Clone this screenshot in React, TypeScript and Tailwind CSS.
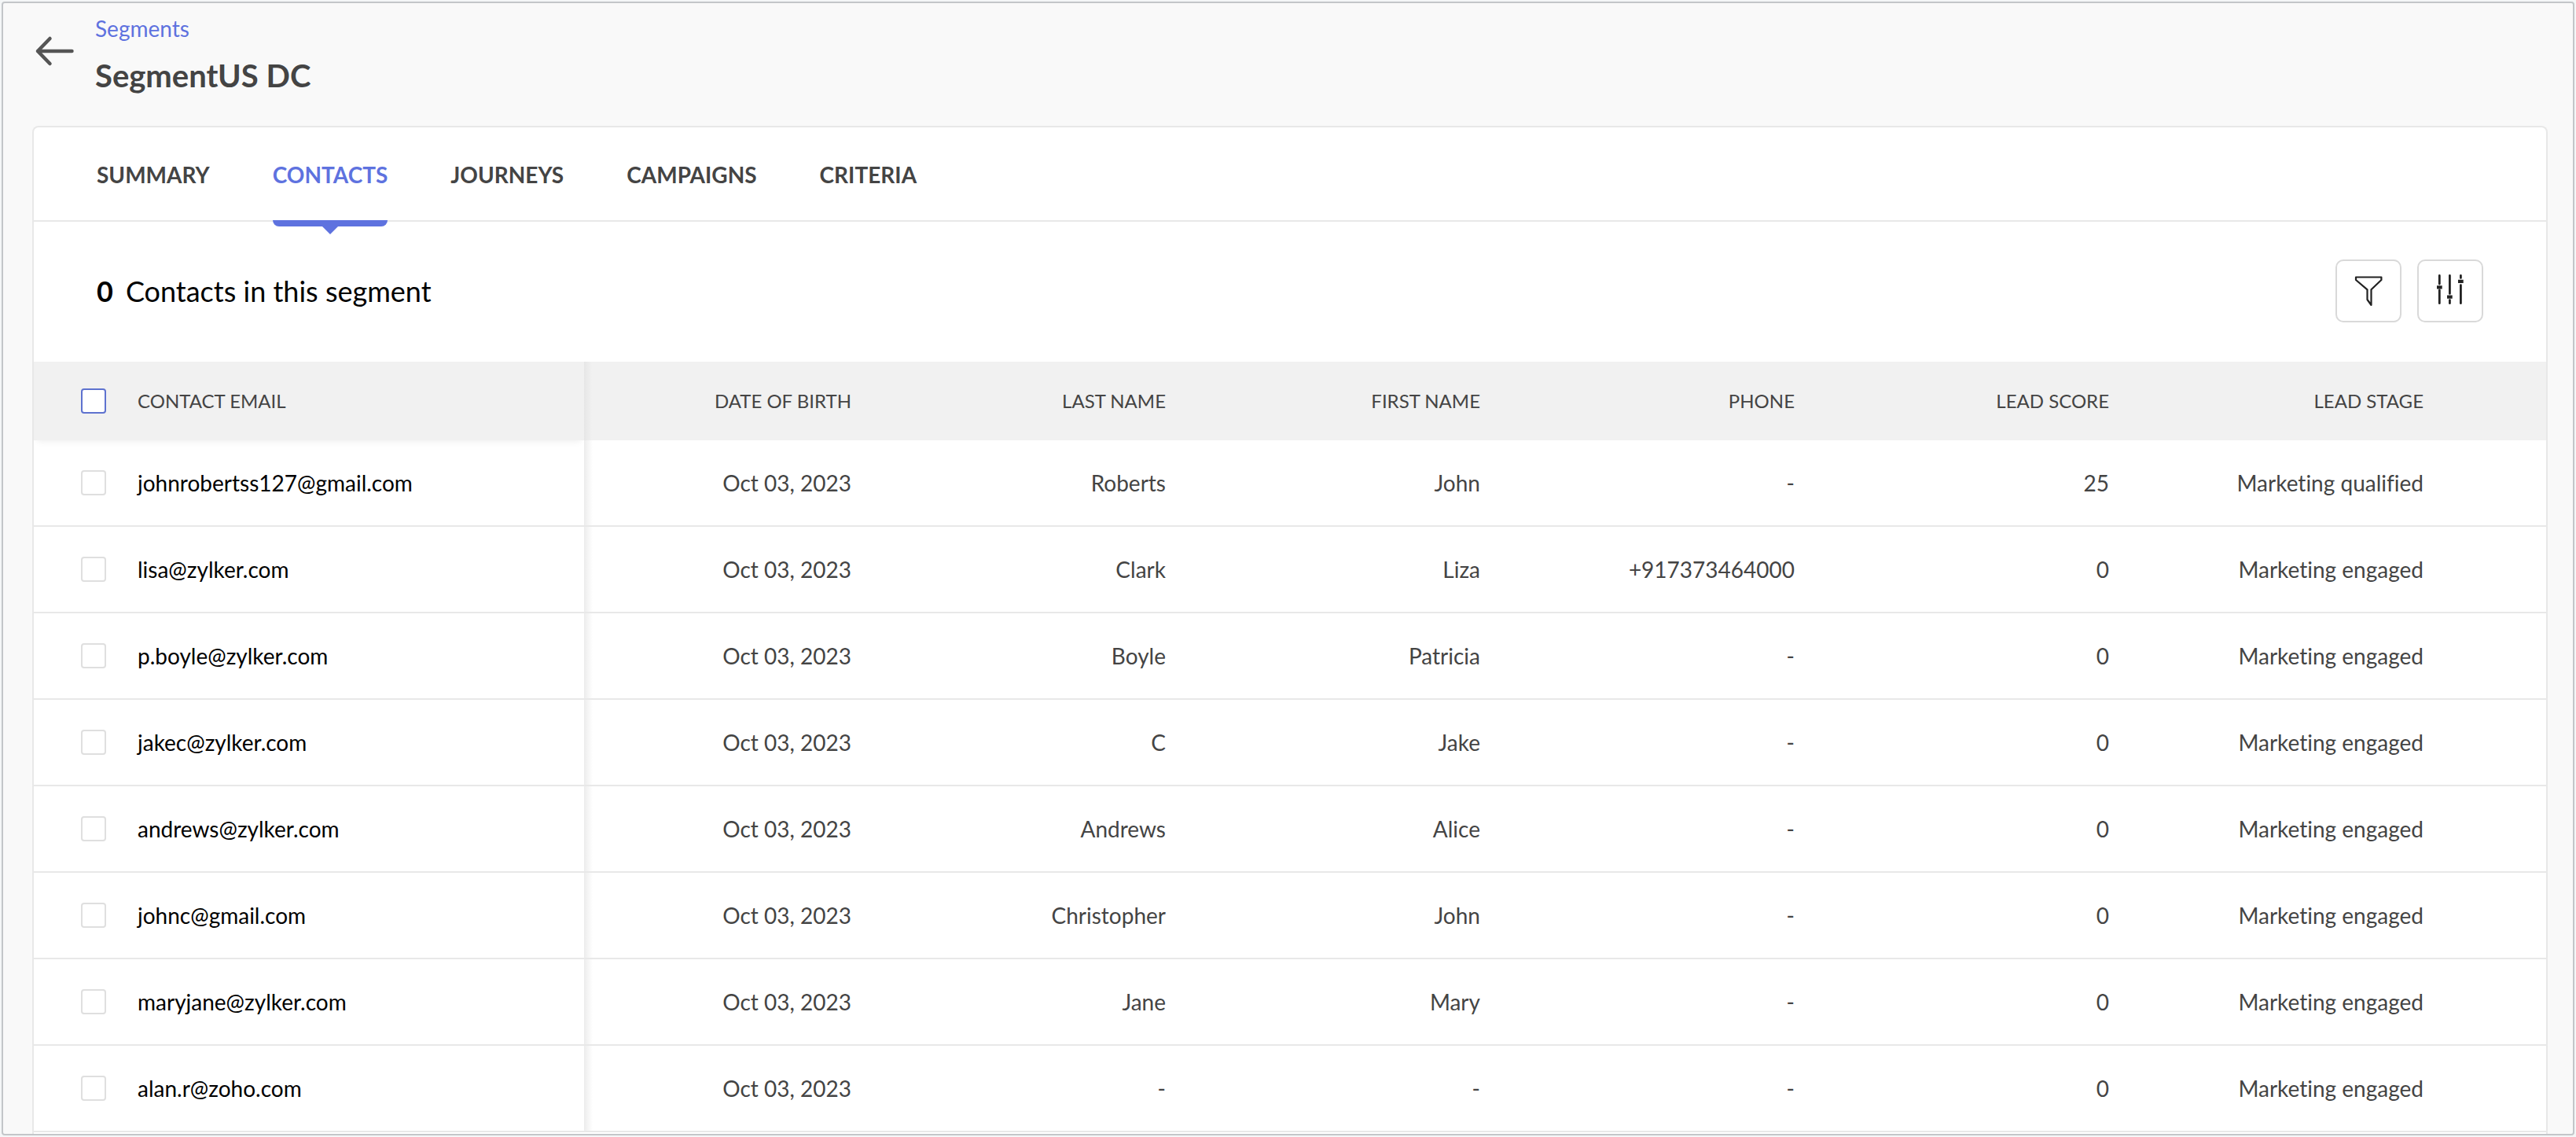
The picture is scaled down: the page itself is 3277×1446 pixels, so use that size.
const tabs = ['SUMMARY', 'CONTACTS', 'JOURNEYS', 'CAMPAIGNS', 'CRITERIA']
const activeTab = 'CONTACTS'

const columns = ['DATE OF BIRTH', 'LAST NAME', 'FIRST NAME', 'PHONE', 'LEAD SCORE', 'LEAD STAGE']

const contacts = [
  { email: 'johnrobertss127@gmail.com', values: ['Oct 03, 2023', 'Roberts', 'John', '-', '25', 'Marketing qualified'] },
  { email: 'lisa@zylker.com', values: ['Oct 03, 2023', 'Clark', 'Liza', '+917373464000', '0', 'Marketing engaged'] },
  { email: 'p.boyle@zylker.com', values: ['Oct 03, 2023', 'Boyle', 'Patricia', '-', '0', 'Marketing engaged'] },
  { email: 'jakec@zylker.com', values: ['Oct 03, 2023', 'C', 'Jake', '-', '0', 'Marketing engaged'] },
  { email: 'andrews@zylker.com', values: ['Oct 03, 2023', 'Andrews', 'Alice', '-', '0', 'Marketing engaged'] },
  { email: 'johnc@gmail.com', values: ['Oct 03, 2023', 'Christopher', 'John', '-', '0', 'Marketing engaged'] },
  { email: 'maryjane@zylker.com', values: ['Oct 03, 2023', 'Jane', 'Mary', '-', '0', 'Marketing engaged'] },
  { email: 'alan.r@zoho.com', values: ['Oct 03, 2023', '-', '-', '-', '0', 'Marketing engaged'] },
]

function BackIcon() {
  return (
    <svg width="52" height="42" viewBox="0 0 52 42" fill="none" stroke="#555" strokeWidth="4.5" strokeLinecap="round" strokeLinejoin="round">
      <path d="M47.5 21H4M19.5 5L4 21l15.5 16" />
    </svg>
  )
}

function FilterIcon() {
  return (
    <svg width="80" height="76" viewBox="0 0 80 76" fill="none" stroke="#222" strokeWidth="2.2" strokeLinejoin="round">
      <path d="M24 20.5h32.4V24L43.5 36.3V56l-5-7V36.3L24 24z" />
    </svg>
  )
}

function SlidersIcon() {
  return (
    <svg width="80" height="76" viewBox="0 0 80 76" fill="none" stroke="#222" strokeWidth="2.8">
      <path d="M26.3 18.4V29M26.3 37v16.7M39.4 18.4v23M39.4 49.6v4.1M53.4 18.4v3M53.4 30.6v23.1" strokeLinecap="round" />
      <path d="M23 33.3h6.7M36 45.6h6.7M50 25.8h6.7" strokeWidth="4.2" />
    </svg>
  )
}

export default function App() {
  return (
    <div className="h-screen bg-[#f4f6f7] p-[2px]" style={{ fontFamily: 'Lato, "Liberation Sans", sans-serif' }}>
      <div className="flex h-full flex-col overflow-hidden rounded-sm border-2 border-[#c3c6c9] bg-[#f9f9f9] text-[28px] leading-9 text-[#444] [font-variant-ligatures:no-common-ligatures]">
        <header className="flex items-start gap-[25px] px-10 pt-[14px] pb-8">
          <button type="button" aria-label="Back" className="mt-[26px]">
            <BackIcon />
          </button>
          <div>
            <a href="#segments" className="block text-[#5e72df]">Segments</a>
            <h1 className="mt-3 mb-[2px] text-[40px] leading-[60px] font-bold">SegmentUS DC</h1>
          </div>
        </header>

        <main className="mx-[37px] mr-8 flex-1 overflow-hidden rounded-t-lg border-2 border-b-0 border-[#e8e8e8] bg-white">
          <nav className="flex h-[120px] items-stretch gap-20 border-b-2 border-[#e8e8e8] px-20 font-bold">
            {tabs.map((tab) => (
              <a
                key={tab}
                href={'#' + tab.toLowerCase()}
                className={tab === activeTab ? 'relative flex items-center pt-[2px] text-[#5e72df]' : 'flex items-center pt-[2px]'}
              >
                {tab}
                {tab === activeTab && (
                  <span className="absolute inset-x-0 top-full h-2 rounded-b-lg bg-[#5e72df]">
                    <svg className="absolute top-2 left-1/2 -ml-[10px]" width="20" height="10" viewBox="0 0 20 10">
                      <path d="M0 0h20L10 10z" fill="#5e72df" />
                    </svg>
                  </span>
                )}
              </a>
            ))}
          </nav>

          <section className="flex h-[178px] items-center justify-between px-20 pb-[2px]">
            <h2 className="flex gap-4 text-[36px] leading-[48px] text-black">
              <strong>0</strong>
              <span>Contacts in this segment</span>
            </h2>
            <div className="flex gap-5">
              <button type="button" aria-label="Filter" className="flex h-20 w-[84px] items-center justify-center rounded-[10px] border-2 border-[#d9d9d9]">
                <FilterIcon />
              </button>
              <button type="button" aria-label="Manage columns" className="flex h-20 w-[84px] items-center justify-center rounded-[10px] border-2 border-[#d9d9d9]">
                <SlidersIcon />
              </button>
            </div>
          </section>

          <table className="w-full table-fixed border-separate border-spacing-0">
            <colgroup>
              <col className="w-[700px]" />
              <col className="w-[400px]" />
              <col className="w-[400px]" />
              <col className="w-[400px]" />
              <col className="w-[400px]" />
              <col className="w-[400px]" />
              <col />
            </colgroup>
            <thead>
              <tr className="h-[100px] bg-[#f1f1f1] text-2xl">
                <th className="pl-[60px] text-left font-normal shadow-[0_6px_8px_-4px_rgba(0,0,0,0.06)]">
                  <label className="flex items-center gap-10">
                    <input type="checkbox" className="size-8 appearance-none rounded-sm border-2 border-[#5e72cf] bg-white" />
                    CONTACT EMAIL
                  </label>
                </th>
                {columns.map((column) => (
                  <th
                    key={column}
                    className="pr-[60px] text-right font-normal last:pr-[156px] nth-2:bg-[linear-gradient(to_right,#e6e6e6,#f1f1f1_10px)]"
                  >
                    {column}
                  </th>
                ))}
              </tr>
            </thead>
            <tbody>
              {contacts.map((contact) => (
                <tr key={contact.email} className="h-[110px]">
                  <td className="border-b-2 border-[#e8e8e8] pl-[60px] text-black">
                    <label className="flex items-center gap-10">
                      <input type="checkbox" className="size-8 appearance-none rounded-sm border-2 border-[#dfdfdf] bg-white" />
                      {contact.email}
                    </label>
                  </td>
                  {contact.values.map((value, i) => (
                    <td
                      key={columns[i]}
                      className="border-b-2 border-[#e8e8e8] pr-[60px] text-right last:pr-[156px] nth-2:bg-[linear-gradient(to_right,#ececec,#fff_11px)]"
                    >
                      {value}
                    </td>
                  ))}
                </tr>
              ))}
            </tbody>
          </table>
        </main>
      </div>
    </div>
  )
}
